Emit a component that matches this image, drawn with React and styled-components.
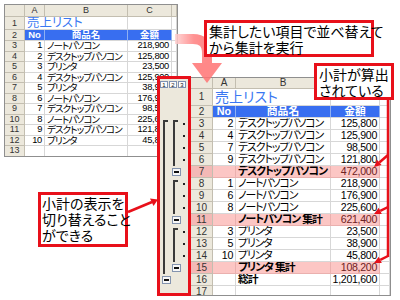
import React from 'react';
import styled, { createGlobalStyle, css } from 'styled-components';

const GlobalStyle = createGlobalStyle`
  html, body { margin: 0; padding: 0; background: #fff; }
  body { width: 400px; height: 300px; overflow: hidden; font-family: "Liberation Sans", "Noto Sans CJK JP", sans-serif; }
  * { box-sizing: border-box; }
`;

const Canvas = styled.div`
  position: relative;
  width: 400px;
  height: 300px;
  background: #fff;
  overflow: hidden;
`;

/* ---------- spreadsheet ---------- */
const SheetFrame = styled.div`
  position: absolute;
  left: ${p => p.$x}px;
  top: ${p => p.$y}px;
  width: ${p => p.$w}px;
  height: ${p => p.$h}px;
  border: 1px solid #8f8f8f;
  background: #fff;
  display: flex;
  overflow: hidden;
  font-family: "Liberation Sans", "Noto Sans CJK JP", sans-serif;
  font-feature-settings: "palt";
  --body: ${p => p.$cfg.body}px;
  --ls: ${p => p.$cfg.ls}px;
  --num: ${p => p.$cfg.num}px;
  --title: ${p => p.$cfg.title}px;
  --hdr: ${p => p.$cfg.hdr}px;
`;

const Grid = styled.div`
  flex: 1;
  display: grid;
  grid-template-columns: ${p => p.$cols};
  grid-template-rows: ${p => p.$rows};
  align-content: start;
`;

const HeadCell = styled.div`
  background: ${p => (p.$pink ? '#f3b9b6' : '#ece8dc')};
  border-right: 1px solid #c3beb0;
  border-bottom: 1px solid #c3beb0;
  color: #333;
  font-size: var(--hdr);
  display: flex;
  align-items: center;
  justify-content: center;
  line-height: 1;
  overflow: hidden;
`;

const Cell = styled.div`
  background: ${p => (p.$pink ? '#fcc6c4' : 'transparent')};
  border-right: 1px solid ${p => (p.$pink ? '#eab0ae' : '#d7d7d7')};
  border-bottom: 1px solid ${p => (p.$pink ? '#eab0ae' : '#d7d7d7')};
  color: #000;
  font-size: var(--body);
  letter-spacing: var(--ls);
  font-weight: ${p => (p.$bold ? 700 : 400)};
  display: flex;
  align-items: center;
  justify-content: ${p => (p.$align === 'right' ? 'flex-end' : 'flex-start')};
  padding: 0 2px;
  white-space: nowrap;
  overflow: hidden;
  line-height: 1;
`;

const TitleCell = styled(Cell)`
  grid-column: span 2;
  font-size: var(--title);
  letter-spacing: 0;
  color: #3b78f2;
  padding-left: 2px;
`;

const BlueCell = styled(Cell)`
  background: #386ef0;
  border-right-color: #8fb0f2;
  color: #fff;
  font-weight: 700;
  letter-spacing: 0;
  justify-content: center;
`;

const Num = styled.span`
  font-family: "Liberation Sans", sans-serif;
  font-size: var(--num);
  letter-spacing: -0.3px;
  color: ${p => (p.$sub ? '#6e2222' : '#000')};
`;

/* ---------- outline bar ---------- */
const OutlinePane = styled.div`
  flex: none;
  width: 33px;
  background: #ece8dc;
  display: flex;
  flex-direction: column;
`;

const OutlineRow = styled.div`
  flex: none;
  height: ${p => p.$h}px;
  padding-left: 4px;
  display: grid;
  grid-template-columns: 10px 10px 1fr;
`;

const LevelRow = styled.div`
  flex: none;
  height: ${p => p.$h}px;
  display: flex;
  align-items: flex-end;
  gap: 1px;
  padding: 0 0 1px 2px;
`;

const LevelBtn = styled.div`
  width: 8px;
  height: 7px;
  border: 1px solid #7f91b2;
  background: #fbfbfb;
  font-size: 6px;
  line-height: 1;
  color: #111;
  display: flex;
  align-items: center;
  justify-content: center;
`;

const Slot = styled.div`
  display: flex;
  align-items: ${p => (p.$kind === 'line' || p.$kind === 'start' ? 'stretch' : 'center')};
`;

const Stroke = styled.div`
  margin-left: 1px;
  width: 5px;
  border-left: 2px solid #3a3a3a;
  ${p => p.$start && css`
    margin-top: 2px;
    border-top: 2px solid #3a3a3a;
  `}
`;

const MinusBtn = styled.div`
  width: 9px;
  height: 8px;
  border: 1px solid #8393ae;
  background: #f7f7f7;
  display: flex;
  align-items: center;
  justify-content: center;
`;

const Dash = styled.div`
  width: 5px;
  height: 2px;
  background: #111;
`;

const Dot = styled.div`
  margin-left: 1px;
  width: 2px;
  height: 2px;
  background: #222;
`;

function OutlineSlot({ kind }) {
  return (
    <Slot $kind={kind}>
      {kind === 'line' && <Stroke />}
      {kind === 'start' && <Stroke $start />}
      {kind === 'minus' && <MinusBtn><Dash /></MinusBtn>}
      {kind === 'dot' && <Dot />}
    </Slot>
  );
}

/* ---------- annotations ---------- */
const Callout = styled.div`
  position: absolute;
  left: ${p => p.$x}px;
  top: ${p => p.$y}px;
  width: ${p => p.$w}px;
  height: ${p => p.$h}px;
  border: 3px solid #e8101a;
  background: #fff;
  padding-left: ${p => p.$pl}px;
  font-family: "Noto Sans CJK JP", sans-serif;
  font-feature-settings: "palt";
  font-size: 14px;
  line-height: 16px;
  color: #000;
  display: flex;
  flex-direction: column;
  white-space: nowrap;
`;

const RedFrame = styled.div`
  position: absolute;
  left: 157px;
  top: 76px;
  width: 34px;
  height: 220px;
  border: 3px solid #e8101a;
`;

const Overlay = styled.svg`
  position: absolute;
  left: ${p => p.$x}px;
  top: ${p => p.$y}px;
  overflow: visible;
`;

/* ---------- data ---------- */
const leftRows = [
  { title: '売上リスト' },
  { head: true },
  { a: '1', b: 'ノートパソコン', c: '218,900' },
  { a: '2', b: 'デスクトップパソコン', c: '125,800' },
  { a: '3', b: 'プリンタ', c: '23,500' },
  { a: '4', b: 'デスクトップパソコン', c: '125,900' },
  { a: '5', b: 'プリンタ', c: '38,900' },
  { a: '6', b: 'ノートパソコン', c: '176,900' },
  { a: '7', b: 'デスクトップパソコン', c: '98,500' },
  { a: '8', b: 'ノートパソコン', c: '225,600' },
  { a: '9', b: 'デスクトップパソコン', c: '121,800' },
  { a: '10', b: 'プリンタ', c: '45,800' },
  {},
];

const rightRows = [
  { title: '売上リスト', o: ['', '', ''] },
  { head: true, o: ['', '', ''] },
  { a: '2', b: 'デスクトップパソコン', c: '125,800', o: ['start', 'start', 'dot'] },
  { a: '4', b: 'デスクトップパソコン', c: '125,900', o: ['line', 'line', 'dot'] },
  { a: '7', b: 'デスクトップパソコン', c: '98,500', o: ['line', 'line', 'dot'] },
  { a: '9', b: 'デスクトップパソコン', c: '121,800', o: ['line', 'line', 'dot'] },
  { sub: true, b: 'デスクトップパソコン', c: '472,000', o: ['line', 'minus', ''] },
  { a: '1', b: 'ノートパソコン', c: '218,900', o: ['line', 'start', 'dot'] },
  { a: '6', b: 'ノートパソコン', c: '176,900', o: ['line', 'line', 'dot'] },
  { a: '8', b: 'ノートパソコン', c: '225,600', o: ['line', 'line', 'dot'] },
  { sub: true, b: 'ノートパソコン 集計', c: '621,400', o: ['line', 'minus', ''] },
  { a: '3', b: 'プリンタ', c: '23,500', o: ['line', 'start', 'dot'] },
  { a: '5', b: 'プリンタ', c: '38,900', o: ['line', 'line', 'dot'] },
  { a: '10', b: 'プリンタ', c: '45,800', o: ['line', 'line', 'dot'] },
  { sub: true, b: 'プリンタ 集計', c: '108,200', o: ['line', 'minus', ''] },
  { total: true, b: '総計', c: '1,201,600', o: ['minus', '', ''] },
  { o: ['', '', ''] },
];

const leftCfg = {
  x: 4, y: 4, w: 174, h: 153,
  cols: '20px 20px 83px 44px 1fr',
  rows: '12px 13px 11px repeat(11, 10.5px)',
  body: 9.5, ls: -0.9, num: 9.3, title: 12.4, hdr: 9,
};

const rightCfg = {
  x: 157, y: 77, w: 234, h: 219,
  cols: '22px 23px 95px 49px 1fr',
  rows: '11px 17px repeat(16, 12px)',
  heights: [11, 17, ...Array(16).fill(12)],
  body: 10.8, ls: -1, num: 10.6, title: 14, hdr: 10,
};

function SheetRow({ n, r }) {
  if (r.title) {
    return (
      <>
        <HeadCell>{n}</HeadCell>
        <TitleCell>{r.title}</TitleCell>
        <Cell />
        <Cell />
      </>
    );
  }
  if (r.head) {
    return (
      <>
        <HeadCell>{n}</HeadCell>
        <BlueCell>No</BlueCell>
        <BlueCell>商品名</BlueCell>
        <BlueCell>金額</BlueCell>
        <Cell />
      </>
    );
  }
  return (
    <>
      <HeadCell $pink={r.sub}>{n}</HeadCell>
      <Cell $align="right" $pink={r.sub}>{r.a && <Num>{r.a}</Num>}</Cell>
      <Cell $pink={r.sub} $bold={r.sub || r.total}>{r.b}</Cell>
      <Cell $align="right" $pink={r.sub}>{r.c && <Num $sub={r.sub}>{r.c}</Num>}</Cell>
      <Cell />
    </>
  );
}

function Sheet({ cfg, rows, outline }) {
  return (
    <SheetFrame $x={cfg.x} $y={cfg.y} $w={cfg.w} $h={cfg.h} $cfg={cfg}>
      {outline && (
        <OutlinePane>
          <LevelRow $h={cfg.heights[0]}>
            <LevelBtn>1</LevelBtn>
            <LevelBtn>2</LevelBtn>
            <LevelBtn>3</LevelBtn>
          </LevelRow>
          {rows.map((r, i) => (
            <OutlineRow key={i} $h={cfg.heights[i + 1]}>
              {r.o.map((k, j) => <OutlineSlot key={j} kind={k} />)}
            </OutlineRow>
          ))}
        </OutlinePane>
      )}
      <Grid $cols={cfg.cols} $rows={cfg.rows}>
        <HeadCell />
        <HeadCell>A</HeadCell>
        <HeadCell>B</HeadCell>
        <HeadCell>C</HeadCell>
        <HeadCell />
        {rows.map((r, i) => <SheetRow key={i} n={i + 1} r={r} />)}
      </Grid>
    </SheetFrame>
  );
}

function PinkArrow() {
  return (
    <Overlay $x={170} $y={28} width="60" height="60" viewBox="0 0 60 60">
      <defs>
        <linearGradient id="pk" x1="0" y1="0" x2="1" y2="0">
          <stop offset="0" stopColor="#ffd2d2" />
          <stop offset="0.6" stopColor="#ff7f7f" />
          <stop offset="1" stopColor="#ff7474" />
        </linearGradient>
      </defs>
      <g opacity="0.85">
        <path d="M5 11 H23 Q37 11 37 25 V37" fill="none" stroke="url(#pk)" strokeWidth="10" />
        <polygon points="22,35 52,35 37,55" fill="#ff7474" />
      </g>
    </Overlay>
  );
}

function SubtotalArrows() {
  const tips = [[28, 60, 14, 72], [28, 112, 14, 119], [28, 161, 14, 168]];
  return (
    <Overlay $x={360} $y={95} width="35" height="180" viewBox="0 0 35 180">
      <line x1="28" y1="3" x2="28" y2="162" stroke="#e8101a" strokeWidth="2.5" />
      {tips.map(([x1, y1, x2, y2], i) => {
        const ang = Math.atan2(y2 - y1, x2 - x1);
        const L = 7, W = 3.5;
        const bx = x2 - L * Math.cos(ang), by = y2 - L * Math.sin(ang);
        const px = -Math.sin(ang) * W, py = Math.cos(ang) * W;
        return (
          <g key={i}>
            <line x1={x1} y1={y1} x2={bx} y2={by} stroke="#e8101a" strokeWidth="2.5" />
            <polygon points={`${x2},${y2} ${bx + px},${by + py} ${bx - px},${by - py}`} fill="#e8101a" />
          </g>
        );
      })}
    </Overlay>
  );
}

function ToggleArrow() {
  return (
    <Overlay $x={125} $y={193} width="36" height="24" viewBox="0 0 36 24">
      <line x1="3" y1="19" x2="27" y2="9" stroke="#e8101a" strokeWidth="2.5" />
      <polygon points="33,6.5 25,5.5 28.5,13" fill="#e8101a" />
    </Overlay>
  );
}

export default function App() {
  return (
    <>
      <GlobalStyle />
      <Canvas>
        <Sheet cfg={leftCfg} rows={leftRows} />
        <Sheet cfg={rightCfg} rows={rightRows} outline />
        <PinkArrow />
        <RedFrame />
        <Callout $x={204} $y={20} $w={170} $h={37} $pl={2}>
          <span>集計したい項目で並べ替えて</span>
          <span>から集計を実行</span>
        </Callout>
        <Callout $x={314} $y={63} $w={80} $h={37} $pl={2}>
          <span>小計が算出</span>
          <span>されている</span>
        </Callout>
        <Callout $x={38} $y={192} $w={90} $h={55} $pl={1}>
          <span>小計の表示を</span>
          <span>切り替えること</span>
          <span>ができる</span>
        </Callout>
        <SubtotalArrows />
        <ToggleArrow />
      </Canvas>
    </>
  );
}
